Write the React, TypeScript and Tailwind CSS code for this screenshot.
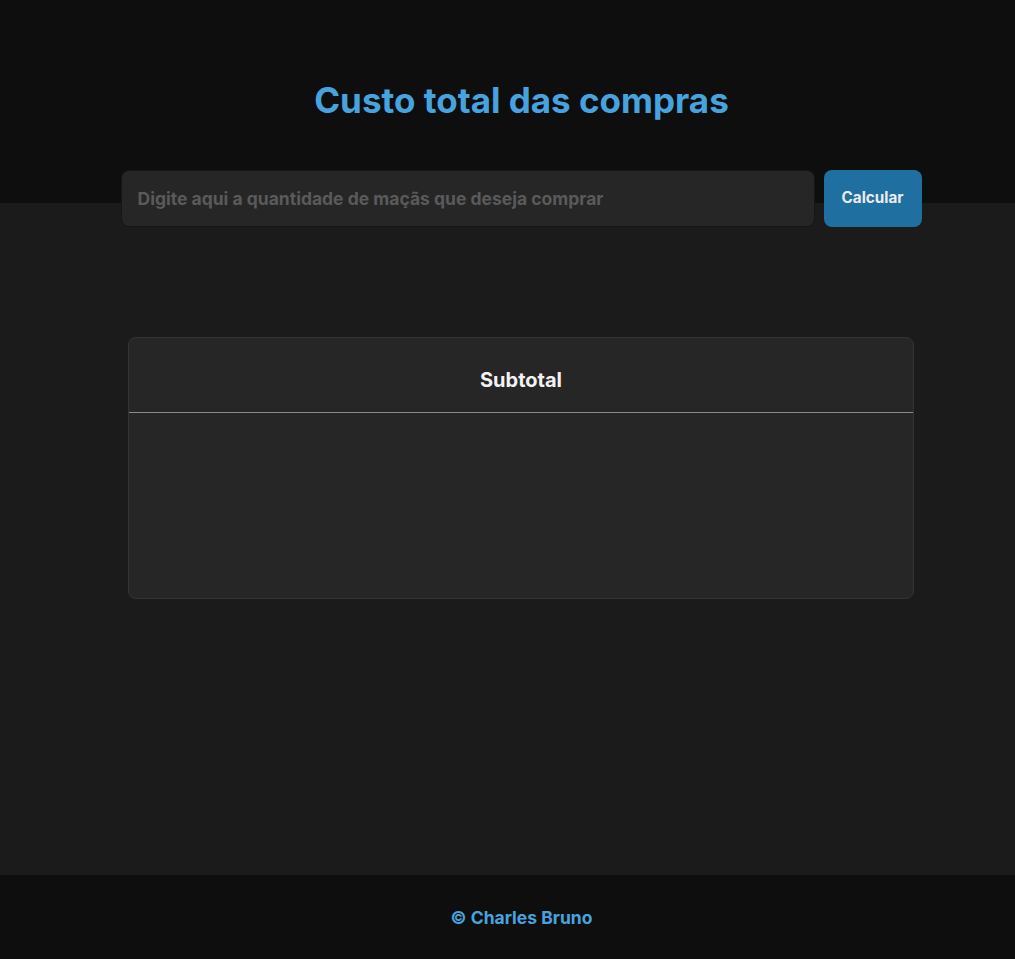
import React from "react";

export default function App() {
  return (
    <div className="min-h-[959px] flex flex-col bg-[#1b1b1b] font-['Inter',sans-serif]">
      <header className="h-[203px] bg-[#0e0e0e] flex flex-col items-center shrink-0 pl-[28px]">
        <h1 className="mt-[79px] text-[35px] leading-[42px] font-bold text-[#47a3df]">Custo total das compras</h1>
      </header>
      <main className="flex-1 flex flex-col items-center pl-[27px]">
        <form className="-mt-[33px] flex gap-[9px] w-[801px]" onSubmit={(e) => e.preventDefault()}>
          <input
            className="h-[57px] w-[694px] rounded-[8px] bg-[#262626] border border-[#161616] px-[16px] text-[17.5px] font-bold text-[#ddd] placeholder:text-[#5a5a5a] outline-none"
            placeholder="Digite aqui a quantidade de maçãs que deseja comprar"
          />
          <button className="h-[57px] w-[98px] rounded-[8px] bg-[#1f6fa0] text-[#ececec] text-[15.25px] font-bold">Calcular</button>
        </form>
        <section className="mt-[110px] w-[786px] h-[262px] rounded-[8px] bg-[#262626] border border-[#343434] flex flex-col">
          <div className="h-[75px] border-b border-[#8a8a8a] flex items-center justify-center">
            <h2 className="text-[20px] font-bold text-[#f2f2f2] mt-[10px]">Subtotal</h2>
          </div>
        </section>
      </main>
      <footer className="h-[84px] bg-[#0e0e0e] flex items-center justify-center shrink-0 pl-[28px]">
        <p className="text-[17.5px] font-bold text-[#47a3df] mt-[2px]">© Charles Bruno</p>
      </footer>
    </div>
  );
}
